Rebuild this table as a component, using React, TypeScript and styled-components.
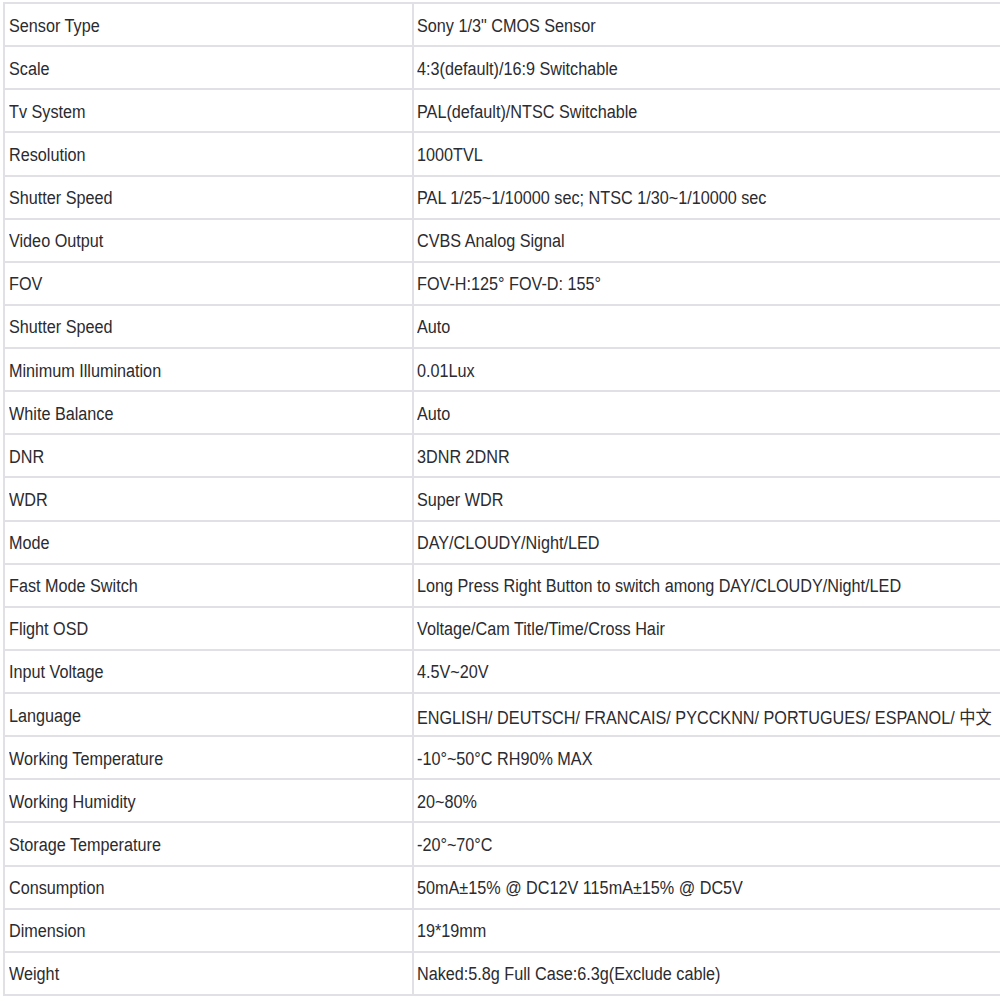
import React from "react";
import styled, { createGlobalStyle } from "styled-components";

const Global = createGlobalStyle`
  html, body { margin: 0; padding: 0; background: #ffffff; }
  body { width: 1000px; height: 1000px; overflow: hidden; }
`;

const rows: [string, string][] = [
  ["Sensor Type", 'Sony 1/3" CMOS Sensor'],
  ["Scale", "4:3(default)/16:9 Switchable"],
  ["Tv System", "PAL(default)/NTSC Switchable"],
  ["Resolution", "1000TVL"],
  ["Shutter Speed", "PAL 1/25~1/10000 sec; NTSC 1/30~1/10000 sec"],
  ["Video Output", "CVBS Analog Signal"],
  ["FOV", "FOV-H:125° FOV-D: 155°"],
  ["Shutter Speed", "Auto"],
  ["Minimum Illumination", "0.01Lux"],
  ["White Balance", "Auto"],
  ["DNR", "3DNR 2DNR"],
  ["WDR", "Super WDR"],
  ["Mode", "DAY/CLOUDY/Night/LED"],
  ["Fast Mode Switch", "Long Press Right Button to switch among DAY/CLOUDY/Night/LED"],
  ["Flight OSD", "Voltage/Cam Title/Time/Cross Hair"],
  ["Input Voltage", "4.5V~20V"],
  ["Language", "ENGLISH/ DEUTSCH/ FRANCAIS/ PYCCKNN/ PORTUGUES/ ESPANOL/ 中文"],
  ["Working Temperature", "-10°~50°C RH90% MAX"],
  ["Working Humidity", "20~80%"],
  ["Storage Temperature", "-20°~70°C"],
  ["Consumption", "50mA±15% @ DC12V 115mA±15% @ DC5V"],
  ["Dimension", "19*19mm"],
  ["Weight", "Naked:5.8g Full Case:6.3g(Exclude cable)"],
];

const Page = styled.div`
  padding: 2px 0 0 3px;
  width: 1000px;
  height: 1000px;
  box-sizing: border-box;
  overflow: hidden;
`;

const Table = styled.div`
  display: grid;
  grid-template-columns: 409px 1fr;
  grid-auto-rows: 43.13px;
  width: 1010px;
  border-top: 2px solid #e1e1e5;
  border-left: 2px solid #e1e1e5;
`;

const Cell = styled.div<{ $pad: number }>`
  display: flex;
  align-items: center;
  padding: 3px 0 0 ${(p) => p.$pad}px;
  border-right: 2px solid #e1e1e5;
  border-bottom: 2px solid #e1e1e5;
  box-sizing: border-box;
  overflow: hidden;
  white-space: nowrap;
`;

const Label = styled.span`
  display: inline-block;
  font-family: "Liberation Sans", Arial, "Noto Sans CJK SC", sans-serif;
  font-size: 18px;
  color: #2b2b30;
  transform: scaleX(0.9);
  transform-origin: left center;
`;

export default function App() {
  return (
    <>
      <Global />
      <Page>
        <Table>
          {rows.map(([k, v], i) => (
            <React.Fragment key={i}>
              <Cell $pad={4}>
                <Label>{k}</Label>
              </Cell>
              <Cell $pad={3}>
                <Label>{v}</Label>
              </Cell>
            </React.Fragment>
          ))}
        </Table>
      </Page>
    </>
  );
}
